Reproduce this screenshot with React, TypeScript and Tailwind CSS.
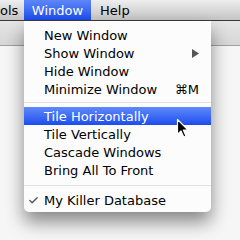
import { Check } from "lucide-react";

type Item = { label: string; shortcut?: string; submenu?: boolean; active?: boolean; checked?: boolean };

const groupA: Item[] = [
  { label: "New Window" },
  { label: "Show Window", submenu: true },
  { label: "Hide Window" },
  { label: "Minimize Window", shortcut: "⌘M" },
];

const groupB: Item[] = [
  { label: "Tile Horizontally", active: true },
  { label: "Tile Vertically" },
  { label: "Cascade Windows" },
  { label: "Bring All To Front" },
];

function Row({ item }: { item: Item }) {
  return (
    <div
      className={
        item.active
          ? "relative flex h-[18px] items-center bg-gradient-to-b from-[#6088f7] to-[#1d4bef] pl-[20px] pr-[12px] text-white"
          : "relative flex h-[18px] items-center pl-[20px] pr-[12px] text-black"
      }
    >
      {item.checked && (
        <span className="absolute left-[4px] top-[4px] text-[#555]">
          <Check size={11} strokeWidth={3} />
        </span>
      )}
      <span className="flex-1">{item.label}</span>
      {item.shortcut && <span className="text-[13px]">{item.shortcut}</span>}
      {item.submenu && (
        <svg width="8" height="9" viewBox="0 0 8 9" className="mr-[-1px]">
          <path d="M0 0 L7 4.5 L0 9 Z" fill="#555" />
        </svg>
      )}
    </div>
  );
}

function Separator({ h }: { h: string }) {
  return (
    <div className={`flex ${h} items-center`}>
      <div className="h-px w-full bg-[#e2e2e2]" />
    </div>
  );
}

function Cursor() {
  return (
    <svg width="14" height="21" viewBox="0 0 14 21" className="absolute left-[176px] top-[118px]">
      <path
        d="M1.5 1.5 L1.5 16.5 L5 13 L7.8 19 L10 18 L7.3 12 L12 12 Z"
        fill="#000"
        stroke="#fff"
        strokeWidth="1.2"
        strokeLinejoin="round"
      />
    </svg>
  );
}

export default function App() {
  return (
    <div className="relative h-[240px] w-[240px] overflow-hidden bg-[#f6f6f6] font-['DejaVu_Sans',sans-serif] text-[13px] leading-none">
      {/* menu bar */}
      <div className="flex h-[21px] items-stretch border-b border-[#3a3a3a] bg-gradient-to-b from-[#eeeeee] to-[#c4c4c4]">
        <div className="flex w-[24px] items-center text-black">ols</div>
        <div className="flex w-[67px] items-center justify-center bg-gradient-to-b from-[#5f86f7] to-[#1c4bee] text-white">
          Window
        </div>
        <div className="flex items-center pl-[9px] text-black">Help</div>
      </div>

      {/* toolbar strip behind */}
      <div className="h-[25px] border-b border-[#a0a0a0] bg-gradient-to-b from-[#e6e6e6] to-[#d6d6d6]" />

      {/* dropdown menu */}
      <div className="absolute left-[24px] top-[21px] w-[187px] rounded-b-[5px] bg-[#fcfcfc] pt-[5px] pb-[3px] shadow-[0_10px_18px_rgba(0,0,0,0.45)]">
        {groupA.map((i) => (
          <Row key={i.label} item={i} />
        ))}
        <Separator h="h-[9px]" />
        {groupB.map((i) => (
          <Row key={i.label} item={i} />
        ))}
        <Separator h="h-[12px]" />
        <Row item={{ label: "My Killer Database", checked: true }} />
      </div>

      <Cursor />
    </div>
  );
}
